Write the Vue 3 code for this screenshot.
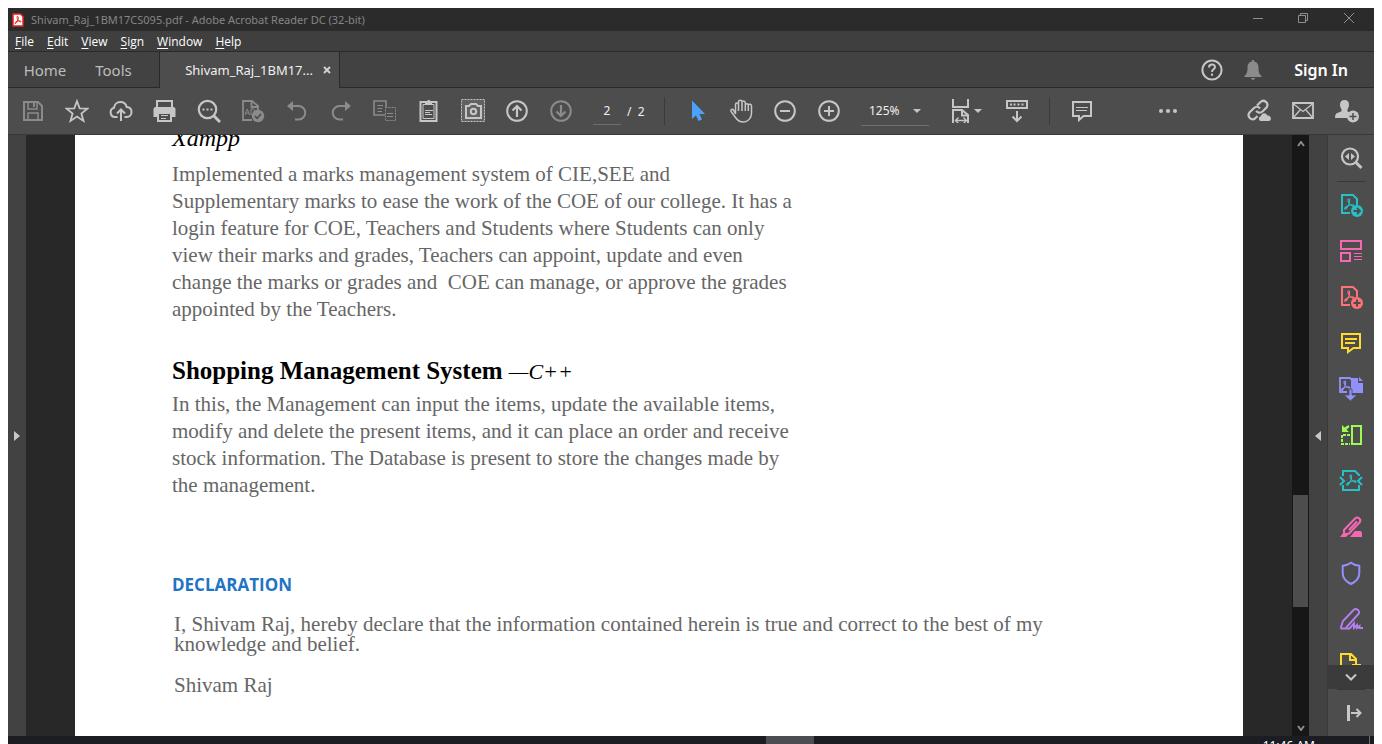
<script setup>
import { ref } from 'vue'

const page = ref('2')
const zoom = ref('125%')

const menus = ['File', 'Edit', 'View', 'Sign', 'Window', 'Help']

const L = '#c6c6c6'
const D = '#8b8b8b'
const pdfMark = (x, y, c) =>
  `<path d="M${x} ${y}c-2 0-.8 3 .8 5 1.600 2 4.200 3 4.200 1.700 0-1.400-3.600-1-6 .1-2 .9-4 2.500-3.200 3.300 1.100.9 3.700-3.600 4.400-6 .5-2 .7-4.100-.2-4.100z" fill="none" stroke="${c}" stroke-width="1.100"/>`

const fileTools = [
  { name: 'Save', art: `<path d="M3 3h14l4 4v14H3z" fill="none" stroke="${D}" stroke-width="2"/><path d="M7 3v7h9V3M7 21v-7h10v7" fill="none" stroke="${D}" stroke-width="1.500"/><path d="M12 4h2v4h-2z" fill="${D}"/>` },
  { name: 'Star', art: `<path d="M12 2.200l2.700 7.200 7.700.3-6 4.800 2.100 7.400L12 17.600l-6.500 4.300 2.100-7.400-6-4.800 7.700-.3z" fill="none" stroke="${L}" stroke-width="1.800"/>` },
  { name: 'Upload', art: `<path d="M8.500 18H6a4.700 4.700 0 0 1-1-9.200c.3-3.400 3-5.800 6.300-5.800 3.200 0 5.700 2 6.400 5 2.900.2 4.800 2.300 4.800 5 0 3-2 5-4.800 5h-2.200" fill="none" stroke="${L}" stroke-width="2"/><path d="M12 22V10.500M8 14.500l4-4 4 4" fill="none" stroke="${L}" stroke-width="2"/>` },
  { name: 'Print', art: `<path d="M4 8V2h15v6" fill="none" stroke="${L}" stroke-width="2"/><path d="M2 8h19l1.500 1.500V18H19v-5H4v5H.5V9.500z" fill="${L}"/><path d="M5 14h13v8H5z" fill="none" stroke="${L}" stroke-width="2"/><path d="M8 16.500h7M8 19.500h5" stroke="${L}"/>` },
  { name: 'Find', art: `<circle cx="10.500" cy="10.500" r="8.700" fill="none" stroke="${L}" stroke-width="2.200"/><path d="M16.500 16.500l6.500 6.500" stroke="${L}" stroke-width="3"/><path d="M5.500 9.500h2v2h-2zM9.500 9.500h2v2h-2zM13.500 9.500h2v2h-2z" fill="${L}"/>` },
  { name: 'Check spelling', art: `<path d="M11 21H2V2h9l6 5v5M10.500 2v6H17" fill="none" stroke="${D}" stroke-width="1.800"/><path d="M4 16l2.300-6 2.200 6M5 14h3M10 16v-6h2c2 0 2 2.500 0 2.800" fill="none" stroke="${D}"/><circle cx="17" cy="17" r="6.200" fill="${D}"/><path d="M13.800 17l2.300 2.300 4-4.500" fill="none" stroke="#4d4d4d" stroke-width="1.600"/>` },
  { name: 'Undo', art: `<path d="M6 7h7.500a6.500 6.500 0 0 1 0 13.500H10" fill="none" stroke="${D}" stroke-width="2"/><path d="M2 7l6-5v10z" fill="${D}"/>` },
  { name: 'Redo', art: `<path d="M17 7h-6.500a6.500 6.500 0 0 0 0 13.500H14" fill="none" stroke="${D}" stroke-width="2"/><path d="M22 7l-6-5v10z" fill="${D}"/>` },
  { name: 'Copy', art: `<path d="M12 16H1V2h12v6" fill="none" stroke="${D}" stroke-width="1.600"/><path d="M4.500 6.500H10M4.500 9.500H9M4.500 12.500H9M14 14.500h6M14 17.500h6" stroke="${D}"/><path d="M12.500 8.500h10v13h-10z" fill="none" stroke="${D}" stroke-dasharray="2 1"/>` },
  { name: 'Clipboard', art: `<path d="M3.500 3h16v19h-16z" fill="none" stroke="${L}" stroke-width="2"/><path d="M6 5.500h11v14H6z" fill="none" stroke="${L}"/><path d="M8 5.500V2.500h2C10 .5 13.500.5 13.500 2.500H15v3z" fill="${L}"/><path d="M8 11.500h8M8 13.500h5M8 15.500h7" stroke="${L}"/>` },
  { name: 'Snapshot', art: `<path d="M.5.5h23v22H.5z" fill="#626262" stroke="${L}" stroke-dasharray="2 1"/><path d="M5 7h3l2-2h5l2 2h3v12H5z" fill="none" stroke="${L}" stroke-width="2"/><circle cx="12.500" cy="12.500" r="2.700" fill="none" stroke="${L}" stroke-width="2"/>` },
  { name: 'Previous page', art: `<circle cx="12" cy="12" r="9.800" fill="none" stroke="${L}" stroke-width="2"/><path d="M12 18V7M7.500 11.500L12 7l4.500 4.500" fill="none" stroke="${L}" stroke-width="2.200"/>` },
  { name: 'Next page', art: `<circle cx="12" cy="12" r="9.800" fill="none" stroke="${D}" stroke-width="2"/><path d="M12 6v11M7.500 12.500L12 17l4.500-4.500" fill="none" stroke="${D}" stroke-width="2.200"/>` }
]

const viewTools = [
  { name: 'Select', art: `<path d="M7 1.500v18.500l4-3.500 2.500 5.500 3.500-1.500-2.500-5.500H20z" fill="#4aa3f8"/>` },
  { name: 'Hand', art: `<path d="M6.500 15V5.500c0-2 3-2 3 0V3c0-2.200 3.500-2.200 3.500 0v.5c0-2 3.300-2 3.300.5v2c0-1.700 3-1.700 3 0 1.200-1.500 3.200-.8 3.200 1V14c0 5-3.500 9-8 9-4 0-6-1.500-8-4.500L2 12.500c-.8-2 1.500-2.800 2.500-1.300L6.500 15M9.500 5v7M13 3v9M16.300 4v8M19.300 6v6" fill="none" stroke="${L}" stroke-width="1.500"/>` },
  { name: 'Zoom out', art: `<circle cx="12" cy="12" r="9.800" fill="none" stroke="${L}" stroke-width="2"/><path d="M7 12h10" stroke="${L}" stroke-width="2"/>` },
  { name: 'Zoom in', art: `<circle cx="12" cy="12" r="9.800" fill="none" stroke="${L}" stroke-width="2"/><path d="M7 12h10M12 7v10" stroke="${L}" stroke-width="2"/>` }
]

const fitTool = `<path d="M1 0v8h15V0" fill="none" stroke="${L}" stroke-width="2"/><path d="M1 24V11h9l6 5v8M10 11v5.500h6" fill="none" stroke="${L}" stroke-width="2"/><path d="M4 21.500h10M6.500 18.500l-3 3 3 3M11.500 18.500l3 3-3 3" fill="none" stroke="${L}" stroke-width="1.400"/>`
const readTool = `<path d="M2 2h20v7H2z" fill="none" stroke="${L}" stroke-width="2"/><path d="M5 5.500h2M8.500 5.500h2M12.500 5.500h2M16.500 5.500h2" stroke="${L}" stroke-width="2"/><path d="M12 12v10M7.500 17.500L12 22l4.500-4.500" fill="none" stroke="${L}" stroke-width="2"/>`
const commentTool = `<path d="M3 3h18v14h-7.500L9 21v-4H3z" fill="none" stroke="${L}" stroke-width="2"/><path d="M6 8.500h12M6 11.500h11" stroke="${L}"/>`
const moreTool = `<circle cx="5" cy="12" r="2" fill="${L}"/><circle cx="12" cy="12" r="2" fill="${L}"/><circle cx="19" cy="12" r="2" fill="${L}"/>`

const shareTools = [
  { name: 'Share link', art: `<g fill="none" stroke="${L}" stroke-width="2.200"><path d="M10 6.500l3.500-3.500c3.500-3.200 9 1.200 6 5.500l-4 4c-2 1.800-5 1.500-6.200-.8"/><path d="M13 9.500c-2-2.500-4.500-2-6-.5L2.500 13.500c-3 4 2 8.500 5.500 6l2.500-2.500"/></g><path d="M13.500 22a2.500 2.500 0 0 1 .3-4.800c.8-3.700 5.400-4 6.500-.7 3.500-.5 5 4 2 5.500z" fill="${L}"/>` },
  { name: 'Send by email', art: `<path d="M2 4h20v15H2z" fill="none" stroke="${L}" stroke-width="1.800"/><path d="M2 4.500l10 8 10-8M2.500 18.500l7-8M21.500 18.500l-7-8" fill="none" stroke="${L}" stroke-width="1.300"/>` },
  { name: 'Share with others', art: `<path d="M9.500 1c3 0 4.500 2 4.500 4.500 0 2-.7 3.500-1.500 4.700v2.300l3.500 1.500c-2.500 1.300-3.500 3.500-3 5H0c0-3.500 1-4.500 3-5.200l3.500-1.500v-2.100C5.700 9 5 7.500 5 5.500 5 3 6.500 1 9.500 1z" fill="${L}"/><circle cx="18" cy="17.500" r="6" fill="${L}"/><path d="M14.500 17.500h7M18 14v7" stroke="#4d4d4d" stroke-width="1.500"/>` }
]

const marquee = `<circle cx="11" cy="10.500" r="8" fill="none" stroke="${L}" stroke-width="2.200"/><path d="M16.500 16l6 6" stroke="${L}" stroke-width="3"/><path d="M10 7v7l-4-3.500zM12 7v7l4-3.500z" fill="${L}"/>`

const sideTools = [
  { name: 'Export PDF', art: `<path d="M11 20H3V2h11l4 4v6" fill="none" stroke="#26c0c7" stroke-width="2"/>${pdfMark(10, 6, '#26c0c7')}<circle cx="18" cy="18" r="6" fill="#26c0c7"/><path d="M14.500 18h6M18 15l3 3-3 3" fill="none" stroke="#4d4d4d" stroke-width="1.800"/>` },
  { name: 'Organize pages', art: `<path d="M2 2h20v8H2zM2 14h9v8H2z" fill="none" stroke="#f767b4" stroke-width="2"/><path d="M15 14.500h8M15 17.500h8M15 20.500h8" stroke="#f767b4"/>` },
  { name: 'Create PDF', art: `<path d="M11 20H3V2h11l4 4v6" fill="none" stroke="#fb7376" stroke-width="2"/>${pdfMark(10, 6, '#fb7376')}<circle cx="18" cy="18" r="6" fill="#fb7376"/><path d="M14.500 18h7M18 14.500v7" fill="none" stroke="#4d4d4d" stroke-width="2"/>` },
  { name: 'Comment', art: `<path d="M3 3h18v14h-6.500L9 21v-4H3z" fill="none" stroke="#ffdc2b" stroke-width="2"/><path d="M6 8h12M6 12h10" stroke="#ffdc2b" stroke-width="2"/>` },
  { name: 'Combine files', art: `<path d="M8 15H1V1h10l2 2" fill="none" stroke="#9290fb" stroke-width="1.800"/>${pdfMark(6, 4, '#9290fb')}<path d="M12 1h7v5h5v10H12zM20 0l4 4h-4z" fill="#9290fb"/><path d="M10 12h3v6h5l-6.500 6L5 18h5z" fill="#9290fb" stroke="#4d4d4d" stroke-width=".8"/>` },
  { name: 'Edit pages', art: `<path d="M13 3h9v18h-9z" fill="none" stroke="#9cfb53" stroke-width="2"/><path d="M11 12H3v9h8" fill="none" stroke="#9cfb53" stroke-width="2" stroke-dasharray="3 1"/><path d="M3 2v7h7L7.500 6.500 10.500 4 9.500 2 5.500 4.500z" fill="#9cfb53"/>` },
  { name: 'Compress PDF', art: `<path d="M4 7V2h12l4 4v1M4 16v5h16v-5" fill="none" stroke="#26c0c7" stroke-width="2"/>${pdfMark(12, 6, '#26c0c7')}<path d="M1 8l4 4-4 4M23 8l-4 4 4 4" fill="none" stroke="#26c0c7" stroke-width="2"/>` },
  { name: 'Redact', art: `<path d="M5 15L16 3.500c3-2.500 7 1 4.500 4L10 18.500l-5 1zM10 15l8-8.500" fill="none" stroke="#f767b4" stroke-width="2"/><path d="M1 22l4-5 4 3-2 2zM11 22l5-6h5.500l1.500 1.500V22z" fill="#f767b4"/>` },
  { name: 'Protect', art: `<path d="M12 1.800c2.500 2 5 2.700 8.300 3V12c0 5.500-3.500 8.700-8.300 11-4.800-2.300-8.300-5.500-8.300-11V4.800c3.300-.3 5.800-1 8.300-3z" fill="none" stroke="#9290fb" stroke-width="2"/>` },
  { name: 'Fill and sign', art: `<path d="M1.500 21.500L4 14 15 2.500c2.500-1.800 6.500 1.500 4.500 4.500L9.500 18l-3 3.500M1.500 21.500h9l4.500-5v4.500l3-3v3l2.500-2v2H24" fill="none" stroke="#b57ff2" stroke-width="1.900"/>` },
  { name: 'More tools', art: `<path d="M10 22H2V1h10l5 5v5M11 1v6h6" fill="none" stroke="#ffdc2b" stroke-width="2"/><path d="M13 12h9" stroke="#ffdc2b" stroke-width="2"/>` }
]
</script>

<template>
  <div class="frame">
    <header class="titlebar">
      <svg class="logo" viewBox="0 0 12 14" aria-hidden="true">
        <path d="M1 1h7.500L11 3.500V13H1z" fill="#fff" stroke="#e8231c" stroke-width="1.500" />
        <path d="M5.500 3.500c-1.300 0 0 3 1 4.200S9 9.500 9 8.500C9 7.500 6.500 7.700 5 8.300S2.500 10 3 10.500C4 11 5.500 8 6 6.500s.5-3-.5-3z" fill="none" stroke="#e8231c" />
      </svg>
      <span class="title">Shivam_Raj_1BM17CS095.pdf - Adobe Acrobat Reader DC (32-bit)</span>
      <div class="window-buttons">
        <button aria-label="Minimize"><svg viewBox="0 0 12 12"><path d="M1 6.500h10" /></svg></button>
        <button aria-label="Restore"><svg viewBox="0 0 12 12"><path d="M1.500 3.500h7v7h-7zM3.500 3.500v-2h7v7h-2" /></svg></button>
        <button aria-label="Close"><svg viewBox="0 0 12 12"><path d="M1 1l10 10M11 1L1 11" /></svg></button>
      </div>
    </header>

    <nav class="menubar">
      <button v-for="m in menus" :key="m"><u>{{ m[0] }}</u>{{ m.slice(1) }}</button>
    </nav>

    <div class="tabs">
      <button class="tab home">Home</button>
      <button class="tab tools">Tools</button>
      <div class="tab doc-tab">
        <button class="doc-name">Shivam_Raj_1BM17...</button>
        <button class="close" aria-label="Close tab"><svg viewBox="0 0 8 8"><path d="M1 1l6 6M7 1L1 7" stroke="#d0d0d0" stroke-width="2" /></svg></button>
      </div>
      <div class="account">
        <button class="round" aria-label="Help">
          <svg viewBox="0 0 24 24"><circle cx="12" cy="12" r="9.600" fill="none" stroke="#c6c6c6" stroke-width="2" /><path d="M9 9.500c0-4 6-4 6-.5 0 2.300-3 2-3 5M12 15.500v2.200" fill="none" stroke="#c6c6c6" stroke-width="2" /></svg>
        </button>
        <button class="round" aria-label="Notifications">
          <svg viewBox="0 0 24 24"><path d="M11 2h2v1.500c3.500.8 4.500 3 4.500 6 0 5 .8 6.500 3 8.500v1h-17v-1c2.200-2 3-3.500 3-8.500 0-3 1-5.200 4.500-6zM9.500 20h5L12 22.300z" fill="#8b8b8b" /></svg>
        </button>
        <button class="sign-in">Sign In</button>
      </div>
    </div>

    <div class="toolbar">
      <button v-for="t in fileTools" :key="t.name" class="tool" :aria-label="t.name">
        <svg viewBox="0 0 24 24" v-html="t.art"></svg>
      </button>
      <input v-model="page" class="page-input" aria-label="Page number" />
      <span class="page-total">/&nbsp; 2</span>
      <span class="rule first"></span>
      <button v-for="t in viewTools" :key="t.name" class="tool" :aria-label="t.name">
        <svg viewBox="0 0 24 24" v-html="t.art"></svg>
      </button>
      <div class="zoom-box">
        <select v-model="zoom" aria-label="Zoom level">
          <option>100%</option>
          <option>125%</option>
          <option>150%</option>
        </select>
        <span class="caret"></span>
      </div>
      <button class="fit" aria-label="Fit width">
        <svg viewBox="0 0 17 24" v-html="fitTool"></svg>
        <span class="caret static"></span>
      </button>
      <button class="tool" aria-label="Page display"><svg viewBox="0 0 24 24" v-html="readTool"></svg></button>
      <span class="rule"></span>
      <button class="tool" aria-label="Add comment"><svg viewBox="0 0 24 24" v-html="commentTool"></svg></button>
      <button class="tool more" aria-label="More"><svg viewBox="0 0 24 24" v-html="moreTool"></svg></button>
      <div class="share">
        <button v-for="t in shareTools" :key="t.name" class="tool" :aria-label="t.name">
          <svg viewBox="0 0 24 24" v-html="t.art"></svg>
        </button>
      </div>
    </div>

    <main class="workspace">
      <button class="strip" aria-label="Open navigation pane">
        <svg viewBox="0 0 6 10"><path d="M0 0l6 5-6 5z" fill="#c8c8c8" /></svg>
      </button>
      <section class="canvas">
        <article class="sheet">
          <h2 class="tech"><em>Xampp</em></h2>
          <p>Implemented a marks management system of CIE,SEE and<br />Supplementary marks to ease the work of the COE of our college. It has a<br />login feature for COE, Teachers and Students where Students can only<br />view their marks and grades, Teachers can appoint, update and even<br />change the marks or grades and&nbsp; COE can manage, or approve the grades<br />appointed by the Teachers.</p>
          <h2 class="project">Shopping Management System <em>—C++</em></h2>
          <p>In this, the Management can input the items, update the available items,<br />modify and delete the present items, and it can place an order and receive<br />stock information. The Database is present to store the changes made by<br />the management.</p>
          <h3>DECLARATION</h3>
          <div class="declaration">
            <p>I, Shivam Raj, hereby declare that the information contained herein is true and correct to the best of my<br />knowledge and belief.</p>
            <p>Shivam Raj</p>
          </div>
        </article>
      </section>
      <div class="scrollbar">
        <button aria-label="Scroll up"><svg viewBox="0 0 8 6"><path d="M1 5l3-4 3 4" /></svg></button>
        <div class="track"><div class="thumb"></div></div>
        <button aria-label="Scroll down"><svg viewBox="0 0 8 6"><path d="M1 1l3 4 3-4" /></svg></button>
      </div>
      <button class="strip right" aria-label="Close tools pane">
        <svg viewBox="0 0 6 10"><path d="M6 0L0 5l6 5z" fill="#c8c8c8" /></svg>
      </button>
      <aside class="side">
        <button class="side-tool" aria-label="Search tools"><svg viewBox="0 0 24 24" v-html="marquee"></svg></button>
        <span class="side-rule"></span>
        <div class="side-list">
          <button v-for="t in sideTools" :key="t.name" class="side-tool" :aria-label="t.name">
            <svg viewBox="0 0 24 24" v-html="t.art"></svg>
          </button>
        </div>
        <button class="side-more" aria-label="Scroll tools"><svg viewBox="0 0 12 8"><path d="M1 1.500l5 5 5-5" fill="none" stroke="#c8c8c8" stroke-width="2" /></svg></button>
        <span class="side-rule"></span>
        <button class="side-tool" aria-label="Collapse pane">
          <svg viewBox="0 0 24 24"><path d="M9.500 4v16" stroke="#c8c8c8" stroke-width="3" /><path d="M12 12h9M17.500 8l4 4-4 4" fill="none" stroke="#c8c8c8" stroke-width="2" /></svg>
        </button>
      </aside>
    </main>

    <footer class="taskbar">
      <span class="active-app"></span>
      <span class="clock">11:46 AM</span>
      <span class="peek"></span>
    </footer>
  </div>
</template>

<style>
body {
  background: #fff;
}
</style>

<style scoped>
.frame {
  box-sizing: border-box;
  height: 100vh;
  padding: 8px 8px 0;
  display: flex;
  flex-direction: column;
  overflow: hidden;
  font-family: "Noto Sans", "Open Sans", sans-serif;
  color: #f0f0f0;
}
button {
  border: 0;
  padding: 0;
  margin: 0;
  background: none;
  color: inherit;
  font: inherit;
  display: flex;
  align-items: center;
  justify-content: center;
}
svg {
  display: block;
}
.titlebar {
  flex: none;
  height: 23px;
  background: #2b2b2b;
  display: flex;
  align-items: center;
  padding: 0 1px 0 4px;
  font-size: 11px;
  color: #858585;
}
.logo {
  width: 12px;
  height: 14px;
  margin-right: 7px;
}
.title {
  white-space: nowrap;
}
.window-buttons {
  margin-left: auto;
  display: flex;
  height: 20px;
  align-self: flex-start;
}
.window-buttons button {
  width: 45px;
}
.window-buttons button:last-child {
  width: 48px;
}
.window-buttons svg {
  width: 12px;
  height: 12px;
  fill: none;
  stroke: #8f8f8f;
}
.menubar {
  flex: none;
  height: 20px;
  background: #3f3f3f;
  border-bottom: 1px solid #2a2a2a;
  display: flex;
  gap: 13px;
  padding-left: 7px;
  font-family: "Open Sans", sans-serif;
  font-size: 12px;
  color: #fff;
}
.menubar u {
  text-underline-offset: 2px;
}
.tabs {
  flex: none;
  height: 36px;
  background: #424242;
  display: flex;
  box-shadow: inset 0 -1px #2a2a2a;
  font-size: 15px;
  color: #bdbdbd;
}
.home {
  width: 74px;
}
.tools {
  width: 63px;
  margin-right: 14px;
}
.doc-tab {
  width: 181px;
  display: flex;
  align-items: center;
  justify-content: flex-end;
  gap: 10px;
  box-sizing: border-box;
  padding-right: 8px;
  background: #4d4d4d;
  border-left: 1px solid #2a2a2a;
  border-right: 1px solid #2a2a2a;
  font-size: 13px;
  color: #f0f0f0;
}
.close svg {
  width: 8px;
  height: 8px;
}
.account {
  margin-left: auto;
  display: flex;
  align-items: center;
  padding-right: 26px;
}
.round {
  width: 41px;
}
.round svg {
  width: 24px;
  height: 24px;
}
.sign-in {
  margin-left: 21px;
  font-size: 16px;
  font-weight: 600;
  color: #fff;
}
.toolbar {
  flex: none;
  height: 46px;
  background: #4d4d4d;
  border-bottom: 1px solid #383838;
  display: flex;
  align-items: center;
  padding: 0 5px 0 3px;
  font-size: 12px;
}
.tool {
  flex: none;
  width: 44px;
  height: 44px;
}
.tool svg {
  width: 24px;
  height: 24px;
}
.page-input {
  box-sizing: border-box;
  width: 28px;
  height: 28px;
  margin: 0 6px 0 10px;
  padding: 0;
  border: 0;
  border-bottom: 1px solid #6e6e6e;
  background: none;
  color: #f0f0f0;
  font: inherit;
  text-align: center;
}
.page-total {
  width: 37px;
}
.rule {
  width: 1px;
  height: 28px;
  margin: 0 10px;
  background: #3a3a3a;
}
.rule.first {
  margin-left: 0;
}
.zoom-box {
  position: relative;
  width: 68px;
  height: 28px;
  margin: 0 23px 0 10px;
  border-bottom: 1px solid #6e6e6e;
}
.zoom-box select {
  appearance: none;
  width: 100%;
  height: 100%;
  padding: 0 0 0 8px;
  border: 0;
  background: none;
  color: #f0f0f0;
  font: inherit;
}
.caret {
  position: absolute;
  right: 8px;
  top: 12px;
  border: 4px solid transparent;
  border-top-color: #c6c6c6;
  border-bottom: 0;
  pointer-events: none;
}
.caret.static {
  position: static;
}
.fit {
  gap: 5px;
  margin-right: 13px;
}
.fit svg {
  width: 17px;
  height: 24px;
}
.more {
  margin-left: 42px;
}
.share {
  display: flex;
  margin-left: auto;
}
.workspace {
  flex: 1;
  min-height: 0;
  display: flex;
}
.strip {
  flex: none;
  width: 18px;
  background: #424242;
}
.strip svg {
  width: 6px;
  height: 10px;
}
.strip.right {
  width: 19px;
  border-right: 1px solid #393939;
}
.canvas {
  flex: 1;
  min-width: 0;
  background: #282828;
  padding: 0 49px;
  display: flex;
}
.sheet {
  flex: 1;
  overflow: hidden;
  background: #fff;
  color: #666;
  padding-left: 97px;
  font-family: "Liberation Serif", serif;
  font-size: 21px;
  line-height: 27px;
  white-space: nowrap;
}
.sheet h2,
.sheet h3,
.sheet p {
  margin: 0;
}
.sheet h2 {
  font-size: 25px;
  line-height: 27px;
  color: #000;
}
.sheet h2 em {
  font-size: 24px;
  font-weight: 400;
}
.sheet .project em {
  font-size: 22px;
}
.sheet .tech {
  margin: -11px 0 9px;
}
.sheet .project {
  margin: 34px 0 6px;
}
.sheet h3 {
  margin-top: 74px;
  font-family: "Open Sans", sans-serif;
  font-size: 17px;
  line-height: 24px;
  color: #1f74c4;
}
.declaration {
  margin: 17px 0 0 2px;
  line-height: 20px;
}
.declaration p + p {
  margin-top: 21px;
}
.scrollbar {
  flex: none;
  width: 17px;
  background: #171717;
  display: flex;
  flex-direction: column;
}
.scrollbar button {
  height: 17px;
}
.scrollbar svg {
  width: 8px;
  height: 6px;
  fill: none;
  stroke: #8b8b8b;
  stroke-width: 2;
}
.track {
  flex: 1;
  display: flex;
  flex-direction: column;
  justify-content: flex-end;
  padding: 0 1px 112px;
}
.thumb {
  height: 112px;
  background: #4d4d4d;
}
.side {
  flex: none;
  width: 46px;
  background: #4d4d4d;
  display: flex;
  flex-direction: column;
  align-items: center;
}
.side-tool {
  flex: none;
  width: 46px;
  height: 46px;
}
.side-tool svg {
  width: 24px;
  height: 24px;
}
.side-rule {
  flex: none;
  width: 28px;
  height: 1px;
  background: #383838;
}
.side-list {
  flex: 1;
  min-height: 0;
  overflow: hidden;
}
.side-more {
  flex: none;
  width: 46px;
  height: 24px;
  background: #3b3b3b;
}
.side-more svg {
  width: 12px;
  height: 8px;
}
.taskbar {
  flex: none;
  height: 8px;
  background: #1b1d23;
  display: flex;
  justify-content: flex-end;
  overflow: hidden;
}
.active-app {
  width: 48px;
  margin-right: 449px;
  background: #4b4d52;
}
.clock {
  padding-top: 2px;
  font-size: 12px;
  line-height: 16px;
  color: #fff;
  white-space: nowrap;
}
.peek {
  width: 1px;
  margin: 0 4px 0 54px;
  background: #6c6d70;
}
</style>
